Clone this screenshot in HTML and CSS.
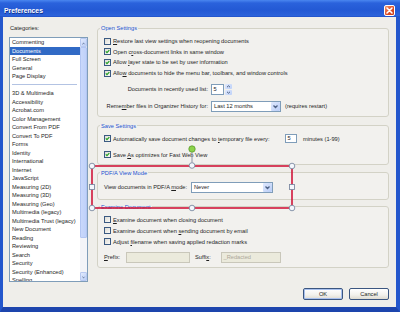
FILE: index.html
```html
<!DOCTYPE html>
<html lang="en">
<head>
<meta charset="utf-8">
<title>Preferences</title>
<link rel="stylesheet" href="styles.css">
</head>
<body>
<div class="window">
  <div class="titlebar">
    <span class="title">Preferences</span>
    <span class="close"><svg viewBox="0 0 11 11" width="11" height="11"><path d="M3 3 L8 8 M8 3 L3 8" stroke="#fff" stroke-width="1.6" stroke-linecap="round"/></svg></span>
  </div>
  <div class="frame">
    <div class="main">
      <div class="cats">
        <div class="cats-label">Categories:</div>
        <div class="listbox">
          <div class="items">
            <div class="item">Commenting</div>
            <div class="item sel">Documents</div>
            <div class="item">Full Screen</div>
            <div class="item">General</div>
            <div class="item">Page Display</div>
            <div class="item sep"></div>
            <div class="item">3D &amp; Multimedia</div>
            <div class="item">Accessibility</div>
            <div class="item">Acrobat.com</div>
            <div class="item">Color Management</div>
            <div class="item">Convert From PDF</div>
            <div class="item">Convert To PDF</div>
            <div class="item">Forms</div>
            <div class="item">Identity</div>
            <div class="item">International</div>
            <div class="item">Internet</div>
            <div class="item">JavaScript</div>
            <div class="item">Measuring (2D)</div>
            <div class="item">Measuring (3D)</div>
            <div class="item">Measuring (Geo)</div>
            <div class="item">Multimedia (legacy)</div>
            <div class="item">Multimedia Trust (legacy)</div>
            <div class="item">New Document</div>
            <div class="item">Reading</div>
            <div class="item">Reviewing</div>
            <div class="item">Search</div>
            <div class="item">Security</div>
            <div class="item">Security (Enhanced)</div>
            <div class="item">Spelling</div>
          </div>
          <div class="vscroll">
            <div class="sb-btn"><svg viewBox="0 0 7 9" width="7" height="9"><path d="M2 5.5 L3.5 4 L5 5.5" stroke="#4d6185" stroke-width="1.2" fill="none"/></svg></div>
            <div class="sb-thumb"></div>
            <div class="sb-track"></div>
            <div class="sb-btn"><svg viewBox="0 0 7 9" width="7" height="9"><path d="M2 3.5 L3.5 5 L5 3.5" stroke="#4d6185" stroke-width="1.2" fill="none"/></svg></div>
          </div>
        </div>
      </div>

      <div class="panes">
        <fieldset class="group g-open">
          <legend>Open Settings</legend>
          <div class="check"><span class="cb"></span><span><u>R</u>estore last view settings when reopening documents</span></div>
          <div class="check"><span class="cb on"><svg viewBox="0 0 5 5" width="5" height="5"><path d="M0.8 2.4 L2 3.7 L4.3 1.2" stroke="#21a121" stroke-width="1.2" fill="none"/></svg></span><span>Open c<u>r</u>oss-document links in same window</span></div>
          <div class="check"><span class="cb on"><svg viewBox="0 0 5 5" width="5" height="5"><path d="M0.8 2.4 L2 3.7 L4.3 1.2" stroke="#21a121" stroke-width="1.2" fill="none"/></svg></span><span>Allow <u>l</u>ayer state to be set by user information</span></div>
          <div class="check"><span class="cb on"><svg viewBox="0 0 5 5" width="5" height="5"><path d="M0.8 2.4 L2 3.7 L4.3 1.2" stroke="#21a121" stroke-width="1.2" fill="none"/></svg></span><span>Allo<u>w</u> documents to hide the menu bar, toolbars, and window controls</span></div>
          <div class="frow r-recent">
            <span class="flabel">Documents in recently used list:</span>
            <span class="field num">5</span>
            <span class="spinbtns">
              <span class="spinbtn"><svg viewBox="0 0 7 5" width="7" height="5"><path d="M2 3.2 L3.5 1.8 L5 3.2" stroke="#4d6185" stroke-width="1" fill="none"/></svg></span>
              <span class="spinbtn"><svg viewBox="0 0 7 5" width="7" height="5"><path d="M2 1.8 L3.5 3.2 L5 1.8" stroke="#4d6185" stroke-width="1" fill="none"/></svg></span>
            </span>
          </div>
          <div class="frow r-remember">
            <span class="flabel">Reme<u>m</u>ber files in Organizer History for:</span>
            <span class="select s-history"><span>Last 12 months</span><span class="arrow"><svg viewBox="0 0 9 9" width="9" height="9"><path d="M2.5 3.5 L4.5 5.5 L6.5 3.5" stroke="#4d6185" stroke-width="1.3" fill="none"/></svg></span></span>
            <span class="note">(requires restart)</span>
          </div>
        </fieldset>

        <fieldset class="group g-save">
          <legend>Save Settings</legend>
          <div class="check row10"><span class="cb on"><svg viewBox="0 0 5 5" width="5" height="5"><path d="M0.8 2.4 L2 3.7 L4.3 1.2" stroke="#21a121" stroke-width="1.2" fill="none"/></svg></span><span class="autolabel">Automatically save document changes to <u>t</u>emporary file every:</span><span class="field small">5</span><span class="minutes">minutes (1-99)</span></div>
          <div class="check row10 r-fast"><span class="cb on"><svg viewBox="0 0 5 5" width="5" height="5"><path d="M0.8 2.4 L2 3.7 L4.3 1.2" stroke="#21a121" stroke-width="1.2" fill="none"/></svg></span><span>Save <u>A</u>s optimizes for Fast Web View</span></div>
        </fieldset>

        <fieldset class="group g-pdfa">
          <legend>PDF/A View Mode</legend>
          <div class="frow">
            <span class="flabel left pdfa-label">View documents in PDF/A <u>m</u>ode:</span>
            <span class="select s-never"><span>Never</span><span class="arrow"><svg viewBox="0 0 9 9" width="9" height="9"><path d="M2.5 3.5 L4.5 5.5 L6.5 3.5" stroke="#4d6185" stroke-width="1.3" fill="none"/></svg></span></span>
          </div>
        </fieldset>

        <fieldset class="group g-exam">
          <legend>Examine Document</legend>
          <div class="check row11"><span class="cb"></span><span><u>E</u>xamine document when closing document</span></div>
          <div class="check row11"><span class="cb"></span><span>Examine document when <u>s</u>ending document by email</span></div>
          <div class="check row11"><span class="cb"></span><span>Adjust <u>f</u>ilename when saving applied redaction marks</span></div>
          <div class="frow r-prefix">
            <span class="plabel"><u>P</u>refix:</span>
            <span class="dis d-prefix"></span>
            <span class="slabel">Suffi<u>x</u>:</span>
            <span class="dis d-suffix">_Redacted</span>
          </div>
        </fieldset>
      </div>
    </div>

    <div class="buttons">
      <button class="btn default" type="button">OK</button>
      <button class="btn" type="button">Cancel</button>
    </div>
  </div>

  <svg class="overlay" width="400" height="312" viewBox="0 0 400 312">
    <line x1="192" y1="152.5" x2="192" y2="162.5" stroke="#8a94a6" stroke-width="1"/>
    <rect x="92" y="166" width="200" height="42" fill="none" stroke="#d0163a" stroke-width="1.6"/>
    <circle cx="192" cy="149" r="3.2" fill="#8bd34a" stroke="#5c9a2c" stroke-width="0.8"/>
    <circle cx="92" cy="166" r="2.8" fill="#f4f7fc" stroke="#7d8ba3" stroke-width="0.9"/>
    <circle cx="192" cy="165.5" r="2.8" fill="#f4f7fc" stroke="#7d8ba3" stroke-width="0.9"/>
    <circle cx="292" cy="166" r="2.8" fill="#f4f7fc" stroke="#7d8ba3" stroke-width="0.9"/>
    <circle cx="92" cy="208" r="2.8" fill="#f4f7fc" stroke="#7d8ba3" stroke-width="0.9"/>
    <circle cx="192" cy="208" r="2.8" fill="#f4f7fc" stroke="#7d8ba3" stroke-width="0.9"/>
    <circle cx="292" cy="208" r="2.8" fill="#f4f7fc" stroke="#7d8ba3" stroke-width="0.9"/>
    <rect x="89.5" y="184.5" width="5" height="5" fill="#f4f7fc" stroke="#7d8ba3" stroke-width="0.9"/>
    <rect x="289.5" y="184.5" width="5" height="5" fill="#f4f7fc" stroke="#7d8ba3" stroke-width="0.9"/>
  </svg>
</div>
</body>
</html>
```
FILE: styles.css
```css
* { box-sizing: border-box; }

html, body {
  margin: 0;
  padding: 0;
}

body {
  width: 400px;
  height: 312px;
  overflow: hidden;
  font-family: "Liberation Sans", Arial, sans-serif;
  font-size: 5.7px;
  color: #1e1e1e;
  background: #ffffff;
}

u { text-decoration-thickness: 0.6px; text-underline-offset: 0.8px; }

.window {
  position: relative;
  width: 400px;
  height: 312px;
  display: flex;
  flex-direction: column;
}

/* ---------- title bar ---------- */
.titlebar {
  height: 17px;
  flex: none;
  display: flex;
  align-items: center;
  justify-content: space-between;
  padding: 3px 5px 0 4px;
  background: linear-gradient(#4a86f0 0%, #2a62dc 18%, #2359d4 60%, #2b62da 92%, #1f4fc4 100%);
}

.title {
  color: #ffffff;
  font-weight: bold;
  font-size: 6.8px;
  text-shadow: 0.5px 0.5px 0 #10308c;
}

.close {
  width: 11px;
  height: 11px;
  border: 1px solid #ffffff;
  border-radius: 2px;
  background: linear-gradient(135deg, #f09a72, #e0512a 50%, #c93a16);
  display: flex;
}

.close svg { margin: -1px; }

/* ---------- frame ---------- */
.frame {
  flex: 1;
  display: flex;
  flex-direction: column;
  border-style: solid;
  border-color: #2457cc;
  border-width: 0 4px 5px 3px;
  border-bottom-color: #1d45ad;
  background: #efeeea;
}

.main {
  display: flex;
  align-items: flex-start;
  gap: 9px;
  height: 265px;
  padding: 7px 0 0 6px;
}

/* ---------- categories list ---------- */
.cats {
  width: 79px;
  flex: none;
}

.cats-label {
  line-height: 8px;
  height: 8px;
  padding-left: 1px;
}

.listbox {
  margin-top: 5px;
  height: 245px;
  border: 1px solid #7f9db9;
  background: #ffffff;
  display: flex;
}

.items {
  flex: 1;
  overflow: hidden;
}

.item {
  height: 8.5px;
  line-height: 8.5px;
  padding-left: 2px;
  white-space: nowrap;
}

.item.sel {
  background: #316ac5;
  color: #ffffff;
}

.item.sep {
  display: flex;
  align-items: center;
  padding: 0 3px 0 2px;
}

.item.sep::before {
  content: "";
  flex: 1;
  height: 1px;
  background: #b3c3e3;
}

.vscroll {
  width: 7px;
  flex: none;
  display: flex;
  flex-direction: column;
  background: #f1f1ec;
}

.sb-btn {
  height: 9px;
  flex: none;
  border: 0.5px solid #b8c9f2;
  border-radius: 1px;
  background: linear-gradient(135deg, #e2eafd, #bccff7);
  display: flex;
}

.sb-thumb {
  height: 191px;
  flex: none;
  border: 0.5px solid #b3c6f3;
  border-radius: 1px;
  background: linear-gradient(90deg, #c9d8fb, #bfd1fa);
}

.sb-track {
  flex: 1;
  background: #f3f4f8;
}

/* ---------- right panes ---------- */
.panes {
  width: 292px;
  flex: none;
  display: flex;
  flex-direction: column;
}

.group {
  margin: 0;
  padding: 4px 6px 4px 6px;
  min-width: 0;
  border: 1px solid #d3d2c6;
  border-radius: 3px;
  background: #f2f1ee;
}

.group legend {
  margin-left: -4px;
  padding: 0 1px;
  line-height: 8px;
  height: 8px;
  color: #1a52d0;
}

.g-save { margin-top: 5px; }
.g-save { padding-bottom: 4px; }

.g-pdfa { margin-top: 4px; padding-top: 5px; padding-bottom: 6px; }

.g-exam { margin-top: 3px; padding-top: 3.5px; padding-bottom: 4px; }

.check {
  display: flex;
  align-items: center;
  height: 10.6px;
  white-space: nowrap;
}

.check.row10 { height: 10px; }
.check.row11 { height: 11px; }
.check.r-fast { margin-top: 6px; }

.cb {
  width: 7px;
  height: 7px;
  flex: none;
  margin-right: 2px;
  border: 1px solid #3b5a82;
  background: linear-gradient(135deg, #dedcd4, #fafaf8);
  display: flex;
}

.frow {
  display: flex;
  align-items: center;
  height: 11px;
  white-space: nowrap;
}

.r-recent { margin-top: 5.6px; }
.r-remember { margin-top: 6px; }
.r-prefix { margin-top: 4.5px; }

.flabel {
  width: 104px;
  text-align: right;
  margin-right: 3px;
}

.flabel.left { text-align: left; }
.pdfa-label { width: 87px; margin-right: 0; }

.field {
  height: 11px;
  border: 1px solid #7f9db9;
  background: #ffffff;
  padding-left: 1.5px;
  line-height: 9px;
}

.field.num { width: 13px; }

.field.small {
  width: 12px;
  height: 9px;
  line-height: 7px;
  margin-right: 6px;
}

.autolabel {
  width: 172px;
  flex: none;
}

.spinbtns {
  width: 7px;
  height: 11px;
  margin-left: 1px;
  display: flex;
  flex-direction: column;
  gap: 1px;
}

.spinbtn {
  flex: 1;
  border-radius: 1px;
  background: linear-gradient(135deg, #e0e9fd, #bcd0f8);
  display: flex;
}

.select {
  height: 11px;
  border: 1px solid #7f9db9;
  background: #ffffff;
  display: flex;
  align-items: center;
  justify-content: space-between;
  padding-left: 2px;
}

.s-history { width: 70px; }
.s-never { width: 82px; }

.arrow {
  width: 9px;
  height: 9px;
  border-radius: 1px;
  background: linear-gradient(135deg, #e0e9fd, #b9cdf7);
  display: flex;
}

.note { margin-left: 4px; }

.plabel { width: 22px; }

.slabel {
  width: 26px;
  margin-left: 5px;
}

.dis {
  height: 11px;
  border: 1px solid #c9c7ba;
  background: #ebeadc;
  color: #aca899;
  line-height: 9px;
  padding-left: 1.5px;
}

.d-prefix { width: 64px; }
.d-suffix { width: 60px; }

/* ---------- buttons ---------- */
.buttons {
  display: flex;
  justify-content: flex-end;
  gap: 6px;
  margin-top: 6px;
  padding-right: 7px;
}

.btn {
  width: 40px;
  height: 12px;
  margin: 0;
  padding: 0;
  font-family: inherit;
  font-size: 5.7px;
  color: #1e1e1e;
  border: 1px solid #3b5680;
  border-radius: 2px;
  background: linear-gradient(#ffffff, #f2f1ec 60%, #dedbd0);
}

.btn.default {
  box-shadow: inset 0 0 0 1px #a9c1ee;
}

/* ---------- editing overlay (selection frame drawn over the dialog) ---------- */
.overlay {
  position: absolute;
  left: 0;
  top: 0;
  pointer-events: none;
}
```
